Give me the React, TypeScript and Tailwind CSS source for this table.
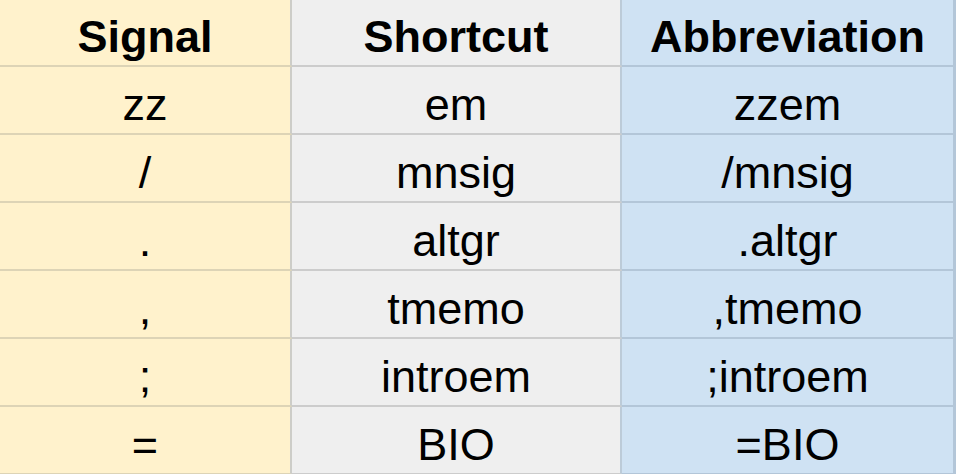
import React from "react";

const rows: [string, string, string][] = [
  ["zz", "em", "zzem"],
  ["/", "mnsig", "/mnsig"],
  [".", "altgr", ".altgr"],
  [",", "tmemo", ",tmemo"],
  [";", "introem", ";introem"],
  ["=", "BIO", "=BIO"],
];

export default function App() {
  const font = { fontFamily: '"Liberation Sans", Arial, sans-serif' };
  return (
    <div className="w-[956px] h-[474px] overflow-hidden bg-white text-black" style={font}>
      <div className="grid grid-cols-[292px_330px_334px]">
        <div className="h-[67px] bg-[#fff2cc] border-r-2 border-b-2 border-r-[#cdcdc8] border-b-[#ddd4b6] flex items-center justify-center pt-2 text-[45px] font-bold leading-none">
          Signal
        </div>
        <div className="h-[67px] bg-[#efefef] border-r-2 border-b-2 border-r-[#bccbd8] border-b-[#cccccc] flex items-center justify-center pt-2 text-[45px] font-bold leading-none">
          Shortcut
        </div>
        <div className="h-[67px] bg-[#cfe2f3] border-r-[3px] border-b-2 border-r-[#b3c6d8] border-b-[#b3c6d8] flex items-center justify-center pt-2 text-[45px] font-bold leading-none">
          Abbreviation
        </div>
        {rows.map((r, i) => (
          <React.Fragment key={i}>
            <div className="h-[68px] bg-[#fff2cc] border-r-2 border-b-2 border-r-[#cdcdc8] border-b-[#ddd4b6] flex items-center justify-center pt-2 text-[45px] leading-none">
              {r[0]}
            </div>
            <div className="h-[68px] bg-[#efefef] border-r-2 border-b-2 border-r-[#bccbd8] border-b-[#cccccc] flex items-center justify-center pt-2 text-[45px] leading-none">
              {r[1]}
            </div>
            <div className="h-[68px] bg-[#cfe2f3] border-r-[3px] border-b-2 border-r-[#b3c6d8] border-b-[#b3c6d8] flex items-center justify-center pt-2 text-[45px] leading-none">
              {r[2]}
            </div>
          </React.Fragment>
        ))}
      </div>
    </div>
  );
}
